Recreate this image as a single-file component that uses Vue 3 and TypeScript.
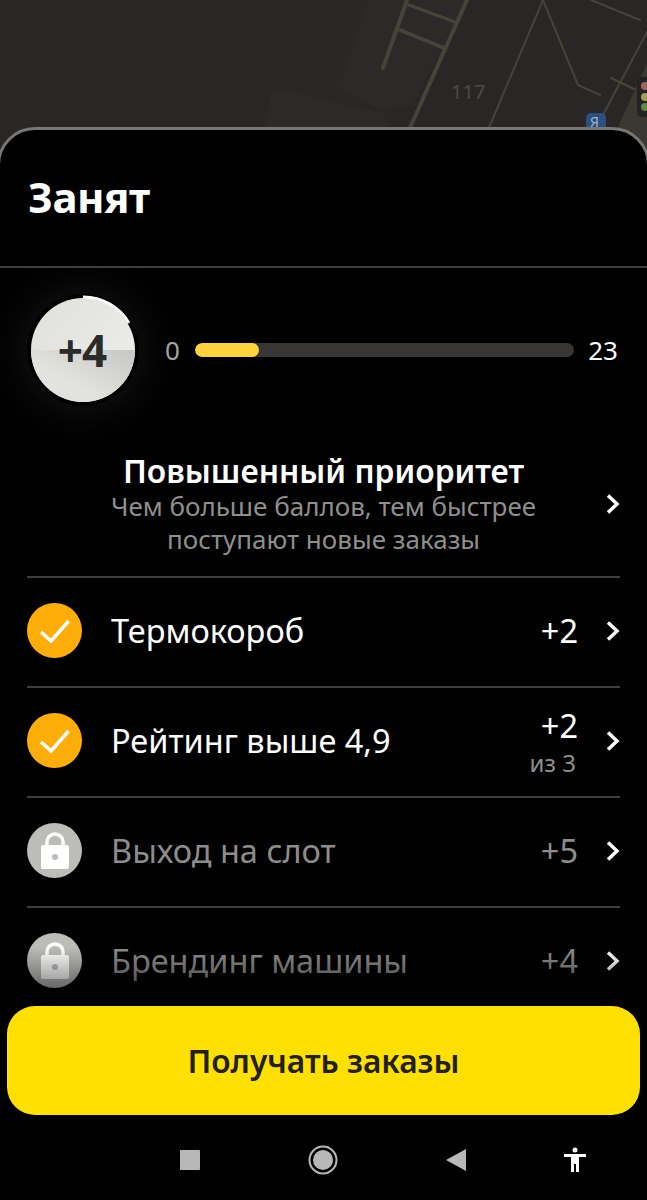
<script setup lang="ts">
type Row = {
  title: string;
  points: string;
  note?: string;
  done: boolean;
};

const rows: Row[] = [
  { title: "Термокороб", points: "+2", done: true },
  { title: "Рейтинг выше 4,9", points: "+2", note: "из 3", done: true },
  { title: "Выход на слот", points: "+5", done: false },
  { title: "Брендинг машины", points: "+4", done: false },
];

const progress = 17;
</script>

<template>
  <div class="screen">
    <svg class="map" width="647" height="170" viewBox="0 0 647 170">
      <rect width="647" height="170" fill="#282726" />
      <polygon points="273,88 384,113 395,170 255,170" fill="#2c2a28" />
      <polygon points="368,0 467,0 412,105 382,110 339,87" fill="#2b2a28" />
      <g fill="none" stroke="#47433a" stroke-linecap="round">
        <path d="M467 0 L409 130" stroke-width="4" />
        <path d="M407 0 L383 68" stroke-width="4" />
        <path d="M409 5 L455 22" stroke-width="3" />
        <path d="M400 30 L444 48" stroke-width="4" />
        <path d="M543 0 L488 130" stroke-width="2" />
        <path d="M543 0 L578 85 L600 95" stroke-width="2" />
        <path d="M648 30 L595 130" stroke-width="2" />
        <path d="M591 0 L640 20" stroke-width="2" />
        <path d="M611 78 L636 90" stroke-width="2" />
      </g>
      <polygon points="647,63 618,127 618,170 647,170" fill="#3b3832" />
      <rect x="586" y="113" width="20" height="30" rx="5" fill="#2c4f80" />
      <rect x="637" y="77" width="14" height="40" rx="5" fill="#232323" />
      <circle cx="645" cy="86" r="4" fill="#a0645e" />
      <circle cx="645" cy="97" r="4" fill="#a89c58" />
      <circle cx="645" cy="107" r="4" fill="#5c8a4a" />
    </svg>
    <span class="map-label">117</span>
    <span class="map-sign">Я</span>

    <section class="sheet">
      <h1 class="title">Занят</h1>

      <div class="level">
        <div class="badge">
          <svg width="112" height="112" viewBox="0 0 112 112">
            <defs>
              <linearGradient id="top" x1="0" y1="0" x2="1" y2="1">
                <stop offset="0" stop-color="#dfdfdc" />
                <stop offset="1" stop-color="#efefec" />
              </linearGradient>
              <linearGradient id="wedge" x1="1" y1="0" x2="0.35" y2="0.6">
                <stop offset="0" stop-color="#c6c6c2" />
                <stop offset="1" stop-color="#e2e2df" />
              </linearGradient>
            </defs>
            <circle cx="56" cy="56" r="55" fill="#000" />
            <circle cx="56" cy="56" r="52" fill="url(#top)" />
            <path d="M108 56 A52 52 0 0 1 4 56 Z" fill="url(#wedge)" />
            <path d="M56 3 A53 53 0 0 1 102 29" fill="none" stroke="#fff" stroke-width="3" />
          </svg>
          <span class="badge-text">+4</span>
        </div>
        <span class="level-min">0</span>
        <div class="track">
          <div class="fill" :style="{ width: progress + '%' }"></div>
        </div>
        <span class="level-max">23</span>
      </div>

      <div class="priority">
        <div class="priority-text">
          <div class="priority-title">Повышенный приоритет</div>
          <div class="priority-sub">Чем больше баллов, тем быстрее поступают новые заказы</div>
        </div>
        <svg class="chevron" width="16" height="24" viewBox="0 0 16 24">
          <path d="M4 3.5 L13 12 L4 20.5" />
        </svg>
      </div>

      <ul class="list">
        <li v-for="row in rows" :key="row.title" class="row" :class="{ locked: !row.done }">
          <span class="status">
            <svg v-if="row.done" width="32" height="26" viewBox="0 0 32 26">
              <path d="M2 14 L12 23 L29.6 3" fill="none" stroke="#fff" stroke-width="3.5" />
            </svg>
            <svg v-else width="30" height="38" viewBox="0 0 30 38">
              <path d="M7 14 V10 A8 8 0 0 1 23 10 V14" fill="none" stroke="#fff" stroke-width="3.5" />
              <path
                fill="#fff"
                fill-rule="evenodd"
                d="M3 13 H27 A2 2 0 0 1 29 15 V35 A2 2 0 0 1 27 37 H3 A2 2 0 0 1 1 35 V15 A2 2 0 0 1 3 13 Z M15 22 A3 3 0 1 0 15 28 A3 3 0 1 0 15 22 Z"
              />
            </svg>
          </span>
          <span class="row-title">{{ row.title }}</span>
          <span class="row-points">
            <span class="points">{{ row.points }}</span>
            <span v-if="row.note" class="note">{{ row.note }}</span>
          </span>
          <svg class="chevron" width="16" height="24" viewBox="0 0 16 24">
            <path d="M4 3.5 L13 12 L4 20.5" />
          </svg>
        </li>
      </ul>

      <div class="footer">
        <button class="go">Получать заказы</button>
      </div>

      <nav class="nav">
        <span class="nav-square"></span>
        <svg width="30" height="30" viewBox="0 0 30 30">
          <circle cx="15" cy="15" r="13.5" fill="none" stroke="#b8b8b8" stroke-width="2" />
          <circle cx="15" cy="15" r="10" fill="#b8b8b8" />
        </svg>
        <svg width="20" height="22" viewBox="0 0 20 22">
          <path d="M20 0 V22 L0 11 Z" fill="#b8b8b8" />
        </svg>
        <svg width="24" height="26" viewBox="0 0 24 26">
          <circle cx="12" cy="3" r="2.5" fill="#fff" />
          <path d="M1 7 H23 V10 H16 V25 H13 V17 H11 V25 H8 V10 H1 Z" fill="#fff" />
        </svg>
      </nav>
    </section>
  </div>
</template>

<style>
html,
body {
  margin: 0;
  background: #000;
}
</style>

<style scoped>
.screen {
  position: relative;
  width: 647px;
  height: 1200px;
  overflow: hidden;
  background: #282726;
  font-family: "Noto Sans", sans-serif;
  color: #fff;
}
.map {
  position: absolute;
  top: 0;
  left: 0;
}
.map-label {
  position: absolute;
  left: 451px;
  top: 78px;
  font-size: 20px;
  color: #4c4a46;
}
.map-sign {
  position: absolute;
  left: 590px;
  top: 112px;
  font-size: 14px;
  color: #9fb4d0;
}
.sheet {
  position: absolute;
  top: 127px;
  left: -3px;
  width: 653px;
  height: 1076px;
  box-sizing: border-box;
  background: #000;
  border: 3px solid #777775;
  border-radius: 38px 38px 0 0;
  display: flex;
  flex-direction: column;
}
.title {
  margin: 0;
  height: 138px;
  box-sizing: border-box;
  padding: 38px 0 0 28px;
  border-bottom: 2px solid #3f3f3e;
  font-family: "Noto Sans", sans-serif;
  font-size: 42px;
  line-height: 58px;
  font-weight: 700;
  letter-spacing: -0.5px;
}
.level {
  display: flex;
  align-items: center;
  height: 107px;
  margin: 28px 29px 0 27px;
}
.badge {
  position: relative;
  width: 112px;
  height: 112px;
  flex: none;
  border-radius: 50%;
  box-shadow: 0 0 50px rgba(255, 255, 255, 0.1);
}
.badge svg {
  display: block;
}
.badge-text {
  position: absolute;
  inset: 0 2px 0 0;
  display: flex;
  align-items: center;
  justify-content: center;
  font-size: 44px;
  font-weight: 700;
  color: #2b2b2a;
  letter-spacing: -1px;
}
.level-min {
  margin-left: 26px;
  font-size: 26px;
  color: #a3a3a1;
}
.track {
  flex: 1;
  height: 14px;
  margin: 1px 14px 0 15px;
  border-radius: 7px;
  background: #393736;
  overflow: hidden;
}
.fill {
  height: 100%;
  border-radius: 7px;
  background: #fcd33a;
}
.level-max {
  font-size: 26px;
  color: #fff;
}
.priority {
  display: flex;
  align-items: center;
  height: 170px;
  padding-top: 24px;
  margin: 5px 27px 0;
  border-bottom: 2px solid #3f3f3e;
  box-sizing: border-box;
}
.priority-text {
  flex: 1;
  padding-left: 16px;
  text-align: center;
}
.priority-title {
  font-size: 31.8px;
  line-height: 38px;
  font-weight: 600;
}
.priority-sub {
  width: 460px;
  margin: 0 auto;
  font-size: 26px;
  line-height: 33px;
  color: #8f8f8d;
}
.chevron {
  flex: none;
}
.chevron path {
  fill: none;
  stroke: #fff;
  stroke-width: 3.5;
}
.list {
  list-style: none;
  margin: 0 27px;
  padding: 0;
  height: 419px;
  overflow: hidden;
  position: relative;
}
.list::after {
  content: "";
  position: absolute;
  left: 0;
  right: 0;
  bottom: 0;
  height: 50px;
  background: linear-gradient(rgba(0, 0, 0, 0), rgba(0, 0, 0, 0.55));
}
.row {
  display: flex;
  align-items: center;
  height: 110px;
  padding-bottom: 3px;
  box-sizing: border-box;
  border-bottom: 2px solid #3f3f3e;
}
.status {
  width: 55px;
  height: 55px;
  flex: none;
  border-radius: 50%;
  background: #ffad09;
  display: flex;
  align-items: center;
  justify-content: center;
}
.locked .status {
  background: #bcbcb9;
}
.row-title {
  flex: 1;
  margin-left: 29px;
  font-size: 32.5px;
  color: #fff;
}
.locked .row-title,
.locked .points {
  color: #8d8d8b;
}
.row-points {
  display: flex;
  flex-direction: column;
  align-items: flex-end;
  margin-right: 26px;
}
.points {
  font-size: 32.5px;
  line-height: 44px;
}
.note {
  font-size: 24px;
  line-height: 30px;
  color: #8f8f8d;
  margin-right: 2px;
}
.footer {
  height: 118px;
  padding: 9px 7px 0;
  box-sizing: border-box;
  background: #000;
}
.go {
  display: block;
  width: 633px;
  height: 109px;
  border: 0;
  border-radius: 28px;
  background: #ffe000;
  color: #21201f;
  font-family: "Noto Sans", sans-serif;
  font-size: 31.7px;
  font-weight: 600;
}
.nav {
  flex: 1;
  display: flex;
  align-items: center;
  padding: 5px 0 0 180px;
}
.nav-square {
  width: 20px;
  height: 20px;
  margin-right: 108px;
  border-radius: 1px;
  background: #b8b8b8;
}
.nav svg:nth-of-type(1) {
  margin-right: 108px;
}
.nav svg:nth-of-type(2) {
  margin-right: 97px;
}
</style>
